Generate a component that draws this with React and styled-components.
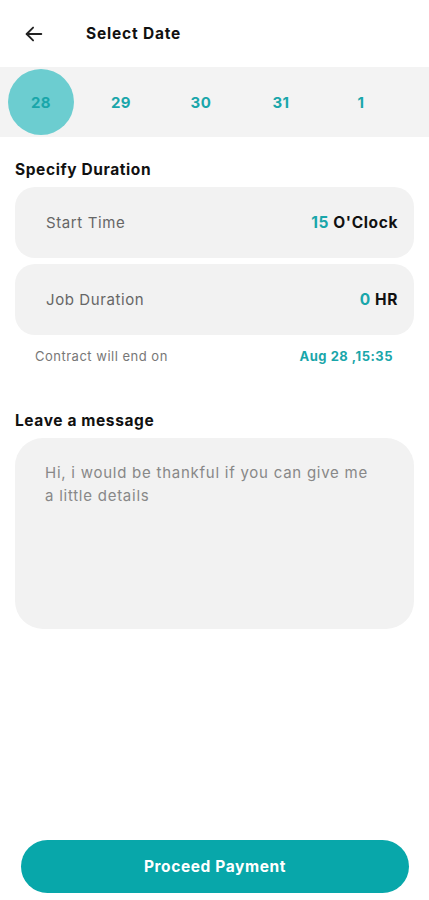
import React from 'react';
import styled, { createGlobalStyle } from 'styled-components';

const GlobalStyle = createGlobalStyle`
  html, body {
    margin: 0;
    padding: 0;
    background: #ffffff;
    font-family: "Inter", "Open Sans", sans-serif;
  }
`;

const dates = [28, 29, 30, 31, 1];

const App = () => {
  return (
    <Page>
      <GlobalStyle />
      <Header>
        <BackButton aria-label="back">
          <svg width="22" height="22" viewBox="0 0 24 24" fill="none" stroke="#222" strokeWidth="2" strokeLinecap="round" strokeLinejoin="round">
            <path d="M20 12H4" />
            <path d="M11 5l-7 7 7 7" />
          </svg>
        </BackButton>
        <Title>Select Date</Title>
      </Header>

      <DateStrip>
        {dates.map((d, i) => (
          <DateItem key={d} active={i === 0}>{d}</DateItem>
        ))}
      </DateStrip>

      <Section>
        <SectionTitle>Specify Duration</SectionTitle>
        <Card>
          <Label>Start Time</Label>
          <Value><Accent>15</Accent> O'Clock</Value>
        </Card>
        <Card>
          <Label>Job Duration</Label>
          <Value><Accent>0</Accent> HR</Value>
        </Card>
        <EndRow>
          <span>Contract will end on</span>
          <EndDate>Aug 28 ,15:35</EndDate>
        </EndRow>
      </Section>

      <MessageSection>
        <SectionTitle>Leave a message</SectionTitle>
        <MessageBox placeholder="Hi, i would be thankful if you can give me a little details" />
      </MessageSection>

      <Footer>
        <ProceedButton>Proceed Payment</ProceedButton>
      </Footer>
    </Page>
  );
};

const Page = styled.div`
  width: 429px;
  height: 900px;
  display: flex;
  flex-direction: column;
  background: #fff;
`;

const Header = styled.div`
  height: 67px;
  display: flex;
  align-items: center;
  padding-left: 23px;
  box-sizing: border-box;
`;

const BackButton = styled.button`
  border: none;
  background: none;
  padding: 0;
  display: flex;
`;

const Title = styled.h1`
  margin: 0 0 0 41px;
  font-size: 15.5px;
  font-weight: 700;
  letter-spacing: 0.8px;
  color: #111;
`;

const DateStrip = styled.div`
  height: 70px;
  background: #f3f3f3;
  display: flex;
  align-items: center;
  padding-left: 8px;
`;

const DateItem = styled.div`
  width: 66px;
  height: 66px;
  margin-right: 14px;
  border-radius: 50%;
  display: flex;
  align-items: center;
  justify-content: center;
  font-size: 15px;
  font-weight: 700;
  letter-spacing: 0.5px;
  color: #19a6aa;
  background: ${p => (p.active ? '#6ccdd0' : 'transparent')};
`;

const Section = styled.div`
  padding: 23px 15px 0;
  display: flex;
  flex-direction: column;
`;

const SectionTitle = styled.h2`
  margin: 0 0 7px;
  font-size: 15.5px;
  font-weight: 700;
  letter-spacing: 0.6px;
  color: #111;
  line-height: 20px;
`;

const Card = styled.div`
  height: 71px;
  margin-bottom: 6px;
  border-radius: 20px;
  background: #f2f2f2;
  display: flex;
  align-items: center;
  justify-content: space-between;
  padding: 0 16px 0 31px;
`;

const Label = styled.span`
  font-size: 15px;
  letter-spacing: 0.6px;
  color: #666;
`;

const Value = styled.span`
  font-size: 15.5px;
  font-weight: 700;
  letter-spacing: 0.6px;
  color: #111;
`;

const Accent = styled.span`
  color: #19a6aa;
`;

const EndRow = styled.div`
  display: flex;
  justify-content: space-between;
  padding: 7px 21px 0 20px;
  font-size: 13px;
  letter-spacing: 0.5px;
  color: #777;
`;

const EndDate = styled.span`
  color: #19a6aa;
  font-weight: 700;
`;

const MessageSection = styled.div`
  padding: 47px 15px 0;
  display: flex;
  flex-direction: column;
`;

const MessageBox = styled.textarea`
  height: 191px;
  border: none;
  border-radius: 28px;
  background: #f2f2f2;
  padding: 23px 38px 23px 30px;
  font-family: inherit;
  font-size: 15px;
  letter-spacing: 0.75px;
  line-height: 23px;
  resize: none;
  outline: none;
  box-sizing: border-box;
  &::placeholder {
    color: #888;
  }
`;

const Footer = styled.div`
  margin-top: auto;
  padding: 0 20px 7px 21px;
`;

const ProceedButton = styled.button`
  width: 100%;
  height: 53px;
  border: none;
  border-radius: 27px;
  background: #08a7aa;
  color: #fff;
  font-family: inherit;
  font-size: 15.5px;
  font-weight: 700;
  letter-spacing: 0.6px;
`;

export default App;
